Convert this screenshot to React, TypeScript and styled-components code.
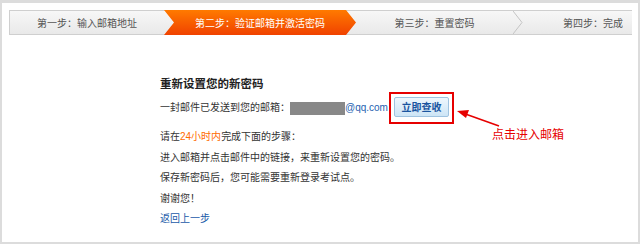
import React from "react";
import styled, { createGlobalStyle } from "styled-components";

const GlobalStyle = createGlobalStyle`
  html, body {
    margin: 0;
    padding: 0;
    background: #dcdcdc;
  }
  body {
    font-family: "Liberation Sans", "Noto Sans CJK SC", sans-serif;
    color: #333;
  }
`;

const Panel = styled.div`
  position: relative;
  margin: 3px 2px 2px 2px;
  height: 239px;
  background: #fff;
  box-sizing: border-box;
  padding: 7px 0 0 7px;
`;

const StepBar = styled.div`
  display: flex;
  width: 623px;
  height: 25px;
  box-sizing: border-box;
  border: 1px solid #cfcfcf;
  border-right: none;
  background: linear-gradient(#f7f7f7, #e9e9e9);
`;

const Step = styled.div<{ $w: number; $active?: boolean; $pad?: number }>`
  position: relative;
  flex: 0 0 ${(p) => p.$w}px;
  display: flex;
  align-items: center;
  justify-content: center;
  padding-left: ${(p) => p.$pad || 0}px;
  box-sizing: border-box;
  font-size: 10px;
  color: ${(p) => (p.$active ? "#fff" : "#555")};
  ${(p) =>
    p.$active &&
    `
    margin: -1px 0;
    height: 25px;
    background: linear-gradient(#ff7a00, #f04200);
    clip-path: polygon(0 0, calc(100% - 10px) 0, 100% 50%, calc(100% - 10px) 100%, 0 100%, 10px 50%);
  `}
`;

const Chevron = styled.svg`
  flex: 0 0 10px;
  height: 23px;
`;

const Content = styled.div`
  margin: 39px 0 0 151px;
  font-size: 10px;
  line-height: 20.6px;
`;

const Title = styled.h2`
  margin: 0;
  font-size: 11.5px;
  line-height: 20px;
  font-weight: bold;
  color: #222;
`;

const MailRow = styled.div`
  display: flex;
  align-items: center;
  height: 28px;
  margin-bottom: 5px;
`;

const Masked = styled.span`
  display: inline-block;
  width: 55px;
  height: 13px;
  background: #888;
`;

const MailLink = styled.span`
  color: #1e5fb0;
`;

const Highlight = styled.div`
  margin-left: 1px;
  padding: 3px;
  border: 2px solid #e60000;
`;

const CheckButton = styled.button`
  width: 55px;
  height: 20px;
  padding: 0;
  border: 1px solid #9fc3e0;
  border-radius: 2px;
  background: linear-gradient(#eef7fd, #cde5f6);
  color: #1a55a0;
  font-family: "Noto Sans CJK SC", sans-serif;
  font-size: 10px;
  font-weight: bold;
`;

const Para = styled.p`
  margin: 0;
`;

const Orange = styled.span`
  color: #ff6a00;
`;

const BackLink = styled.a`
  color: #1a5aa8;
  text-decoration: none;
`;

const Annotation = styled.div`
  position: absolute;
  left: 448px;
  top: 97px;
  width: 130px;
  height: 45px;
`;

const AnnotationText = styled.span`
  position: absolute;
  left: 42px;
  top: 26px;
  font-family: "Noto Sans CJK SC", sans-serif;
  font-size: 12px;
  line-height: 16px;
  color: #e60000;
  white-space: nowrap;
`;

export default function App() {
  return (
    <>
      <GlobalStyle />
      <Panel>
        <StepBar>
          <Step $w={154}>第一步：输入邮箱地址</Step>
          <Step $w={192} $active>
            第二步：验证邮箱并激活密码
          </Step>
          <Step $w={157}>第三步：重置密码</Step>
          <Chevron viewBox="0 0 10 23">
            <polyline points="0,0 9,11.5 0,23" fill="none" stroke="#c4c4c4" strokeWidth="1" />
          </Chevron>
          <Step $w={110} $pad={30}>第四步：完成</Step>
        </StepBar>
        <Content>
          <Title>重新设置您的新密码</Title>
          <MailRow>
            一封邮件已发送到您的邮箱：
            <Masked />
            <MailLink>@qq.com</MailLink>
            <Highlight>
              <CheckButton>立即查收</CheckButton>
            </Highlight>
          </MailRow>
          <Para>
            请在<Orange>24小时内</Orange>完成下面的步骤：
          </Para>
          <Para>进入邮箱并点击邮件中的链接，来重新设置您的密码。</Para>
          <Para>保存新密码后，您可能需要重新登录考试点。</Para>
          <Para>谢谢您！</Para>
          <Para>
            <BackLink href="#">返回上一步</BackLink>
          </Para>
        </Content>
        <Annotation>
          <svg width="130" height="45" viewBox="0 0 130 45">
            <line x1="49" y1="26" x2="14" y2="13.5" stroke="#e60000" strokeWidth="1.6" />
            <polygon points="7,11 19,10 16,18" fill="#e60000" />
          </svg>
          <AnnotationText>点击进入邮箱</AnnotationText>
        </Annotation>
      </Panel>
    </>
  );
}
